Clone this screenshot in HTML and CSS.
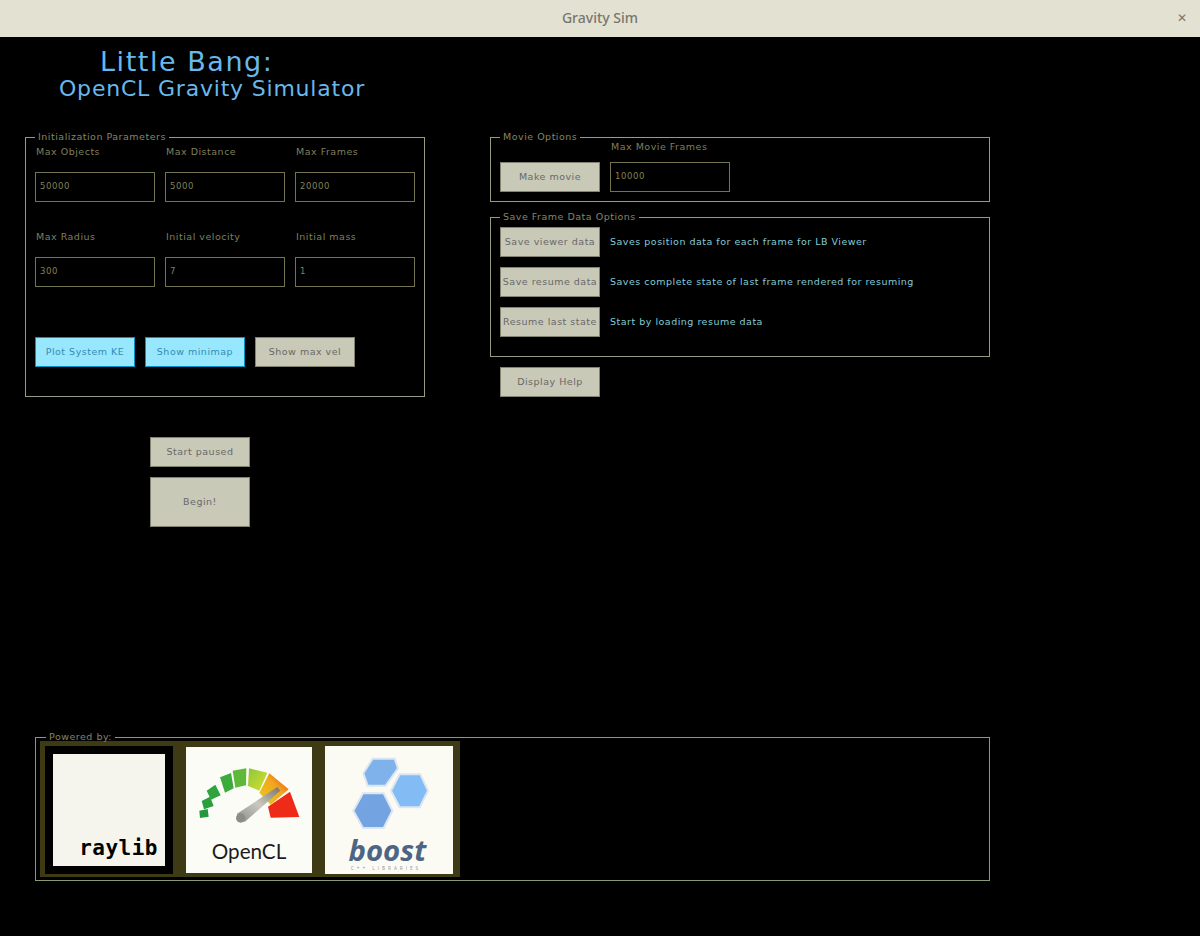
FILE: index.html
```html
<!DOCTYPE html>
<html lang="en">
<head>
    <meta charset="UTF-8">
    <title>Gravity Sim</title>
    <link rel="stylesheet" href="styles.css">
</head>
<body>
    <header class="titlebar">
        <span class="titlebar-name">Gravity Sim</span>
        <span class="titlebar-close">&#10005;</span>
    </header>
    <main class="page">
        <div class="top">
            <div class="left-col">
                <h1 class="title">
                    <span class="title-main">Little Bang:</span>
                    <span class="title-sub">OpenCL Gravity Simulator</span>
                </h1>
                <fieldset class="group init-group">
                    <legend>Initialization Parameters</legend>
                    <div class="param-grid">
                        <div class="param"><label>Max Objects</label><input class="field" value="50000"></div>
                        <div class="param"><label>Max Distance</label><input class="field" value="5000"></div>
                        <div class="param"><label>Max Frames</label><input class="field" value="20000"></div>
                        <div class="param"><label>Max Radius</label><input class="field" value="300"></div>
                        <div class="param"><label>Initial velocity</label><input class="field" value="7"></div>
                        <div class="param"><label>Initial mass</label><input class="field" value="1"></div>
                    </div>
                    <div class="toggle-row">
                        <button class="btn btn-on">Plot System KE</button>
                        <button class="btn btn-on">Show minimap</button>
                        <button class="btn">Show max vel</button>
                    </div>
                </fieldset>
                <div class="start-box">
                    <button class="btn">Start paused</button>
                    <button class="btn btn-big">Begin!</button>
                </div>
            </div>
            <div class="right-col">
                <fieldset class="group movie-group">
                    <legend>Movie Options</legend>
                    <label class="movie-label">Max Movie Frames</label>
                    <div class="movie-row">
                        <button class="btn">Make movie</button>
                        <input class="field" value="10000">
                    </div>
                </fieldset>
                <fieldset class="group save-group">
                    <legend>Save Frame Data Options</legend>
                    <div class="save-row">
                        <button class="btn">Save viewer data</button>
                        <span class="hint">Saves position data for each frame for LB Viewer</span>
                    </div>
                    <div class="save-row">
                        <button class="btn">Save resume data</button>
                        <span class="hint">Saves complete state of last frame rendered for resuming</span>
                    </div>
                    <div class="save-row">
                        <button class="btn">Resume last state</button>
                        <span class="hint">Start by loading resume data</span>
                    </div>
                </fieldset>
                <button class="btn help-btn">Display Help</button>
            </div>
        </div>
        <fieldset class="group powered">
            <legend>Powered by:</legend>
            <div class="logo-strip">
                <div class="logo-raylib"><span>raylib</span></div>
                <svg class="logo logo-opencl" viewBox="18 21 378 378">
                    <defs>
                        <linearGradient id="orange" x1="0.1" y1="0.9" x2="0.9" y2="0.1">
                            <stop offset="0" stop-color="#e8c81c"/>
                            <stop offset="0.6" stop-color="#f2a51e"/>
                            <stop offset="1" stop-color="#e2561c"/>
                        </linearGradient>
                        <linearGradient id="lime" x1="0" y1="0" x2="1" y2="1">
                            <stop offset="0" stop-color="#8ec63c"/>
                            <stop offset="1" stop-color="#d8e02c"/>
                        </linearGradient>
                        <linearGradient id="needle" x1="0" y1="1" x2="1" y2="0">
                            <stop offset="0" stop-color="#8a8a8a"/>
                            <stop offset="0.5" stop-color="#c9c9c0"/>
                            <stop offset="1" stop-color="#77756c"/>
                        </linearGradient>
                    </defs>
                    <rect x="18" y="21" width="378" height="378" fill="#fcfcf6"/>
                    <polygon points="58,212 83,207 86,230 60,234" fill="#23983f"/>
                    <polygon points="65,183 90,170 101,198 72,208" fill="#2a9f3e"/>
                    <polygon points="80,152 106,134 122,166 93,179" fill="#2fa43d"/>
                    <polygon points="120,112 153,99 161,145 135,158" fill="#3dab3c"/>
                    <polygon points="158,92 199,85 198,136 166,143" fill="#5eb83a"/>
                    <polygon points="207,85 262,98 238,152 204,138" fill="url(#lime)"/>
                    <polygon points="268,100 326,148 272,194 238,158" fill="url(#orange)"/>
                    <polygon points="330,155 358,231 272,233 264,200" fill="#ee2a18"/>
                    <polygon points="292,141 301,152 194,246 170,222" fill="url(#needle)"/>
                    <circle cx="182" cy="234" r="14" fill="#8d8d88"/>
                    <text class="opencl-text" x="207" y="358">OpenCL</text>
                </svg>
                <svg class="logo" viewBox="15 18 384 384">
                    <rect x="15" y="18" width="384" height="384" fill="#fbfbf3"/>
                    <polygon points="158,56 224,56 234,85 197,137 143,137 130,100" fill="#7fb2ea" stroke="#dbe6f2" stroke-width="6"/>
                    <polygon points="239,103 301,103 324,152 299,202 239,202 213,152" fill="#83bbf5" stroke="#dbe6f2" stroke-width="6"/>
                    <polygon points="129,160 191,160 217,212 191,264 129,264 100,212" fill="#74a3e2" stroke="#dbe6f2" stroke-width="6"/>
                    <text class="boost-text" x="202" y="363">boost</text>
                    <text class="boost-small" x="198" y="390">C++ LIBRARIES</text>
                </svg>
            </div>
        </fieldset>
    </main>
</body>
</html>
```

FILE: styles.css
```css
* { box-sizing: border-box; }
body { margin: 0; background-color: #000; font-family: "DejaVu Sans", sans-serif; font-size: 9.5px; letter-spacing: 0.5px; color: #7f7f5e; }

.titlebar { height: 37px; display: flex; align-items: center; justify-content: center; padding-bottom: 2px; background-color: #e3e1d2; position: relative; letter-spacing: 0; }
.titlebar-name { font-family: "Noto Sans", sans-serif; font-size: 14px; font-weight: 500; color: #77776e; }
.titlebar-close { position: absolute; right: 13px; top: 11px; font-size: 12px; font-weight: bold; color: #77776e; }

.top { display: flex; align-items: flex-start; padding-left: 25px; }
.left-col { width: 400px; }
.right-col { width: 500px; margin-left: 65px; padding-top: 94px; display: flex; flex-direction: column; }

.title { height: 94px; margin: 0; font-weight: normal; color: #68b8ec; display: flex; flex-direction: column; }
.title-main { margin: 9px 0 0 75px; font-size: 27px; line-height: 32px; letter-spacing: 1.55px; }
.title-sub { margin: -2px 0 0 34px; font-size: 22px; line-height: 26px; letter-spacing: 0.8px; }

.group { margin: 0; padding: 0 9px; border: 1px solid #9a9a80; min-width: 0; }
.group legend { padding: 0 3px; font-size: 9.5px; line-height: 12px; color: #858568; }

.param-grid { display: grid; grid-template-columns: repeat(3, 120px); column-gap: 10px; row-gap: 29px; padding-top: 3px; }
.param label { display: block; padding-left: 1px; line-height: 12px; margin-bottom: 14px; }

.field { display: block; width: 120px; height: 30px; padding: 0 4px 2px; background-color: #000; border: 1px solid #73734f; color: #80805a; font-family: inherit; font-size: 8.5px; letter-spacing: 0.6px; }

.btn { width: 100px; height: 30px; padding: 0 0 2px; background-color: #c9c9b8; border: 1px solid #838370; color: #686868; font-family: inherit; font-size: 9.5px; letter-spacing: inherit; white-space: nowrap; }
.btn-on { background-color: #97e8ff; border-color: #0492c7; color: #368baf; }
.btn-big { height: 50px; }

.toggle-row { display: flex; gap: 10px; margin-top: 50px; padding-bottom: 29px; }
.start-box { margin: 40px 0 0 125px; display: flex; flex-direction: column; gap: 10px; }

.movie-label { display: block; margin: -2px 0 9px 111px; line-height: 12px; }
.movie-row { display: flex; gap: 10px; padding-bottom: 9px; }

.save-group { margin-top: 9px; padding-top: 4px; padding-bottom: 19px; display: flex; flex-direction: column; gap: 10px; }
.save-row { display: flex; align-items: center; gap: 10px; }
.hint { padding-bottom: 2px; color: #84cbd8; }
.help-btn { margin: 10px 0 0 10px; }

.powered { margin: 204px 0 0 35px; width: 955px; padding: 0 4px 3px; border-color: #8b9a72; }
.powered legend { margin-left: 6px; }
.logo-strip { width: 420px; height: 136px; margin-top: -2px; padding: 5px 7px 3px 5px; display: flex; align-items: center; gap: 13px; background-color: #3e3b14; }

.logo-raylib { width: 128px; height: 128px; flex-shrink: 0; border: 8px solid #000; background-color: #f5f5ee; display: flex; align-items: flex-end; justify-content: flex-end; padding: 0 7px 6px 0; }
.logo-raylib span { font-family: "DejaVu Sans Mono", monospace; font-size: 21px; line-height: 24px; font-weight: bold; color: #000; letter-spacing: 0.5px; }

.logo { display: block; width: 128px; height: 128px; flex-shrink: 0; }
.logo-opencl { width: 126px; height: 126px; }
.opencl-text { font-family: "Lato", sans-serif; font-size: 62px; letter-spacing: 0; fill: #1c1c1c; text-anchor: middle; }
.boost-text { font-family: "Open Sans", sans-serif; font-size: 88px; font-weight: bold; font-style: italic; letter-spacing: 0; fill: #4d6585; text-anchor: middle; }
.boost-small { font-family: "Open Sans", sans-serif; font-size: 14px; letter-spacing: 9px; fill: #8a97a5; text-anchor: middle; }
```
